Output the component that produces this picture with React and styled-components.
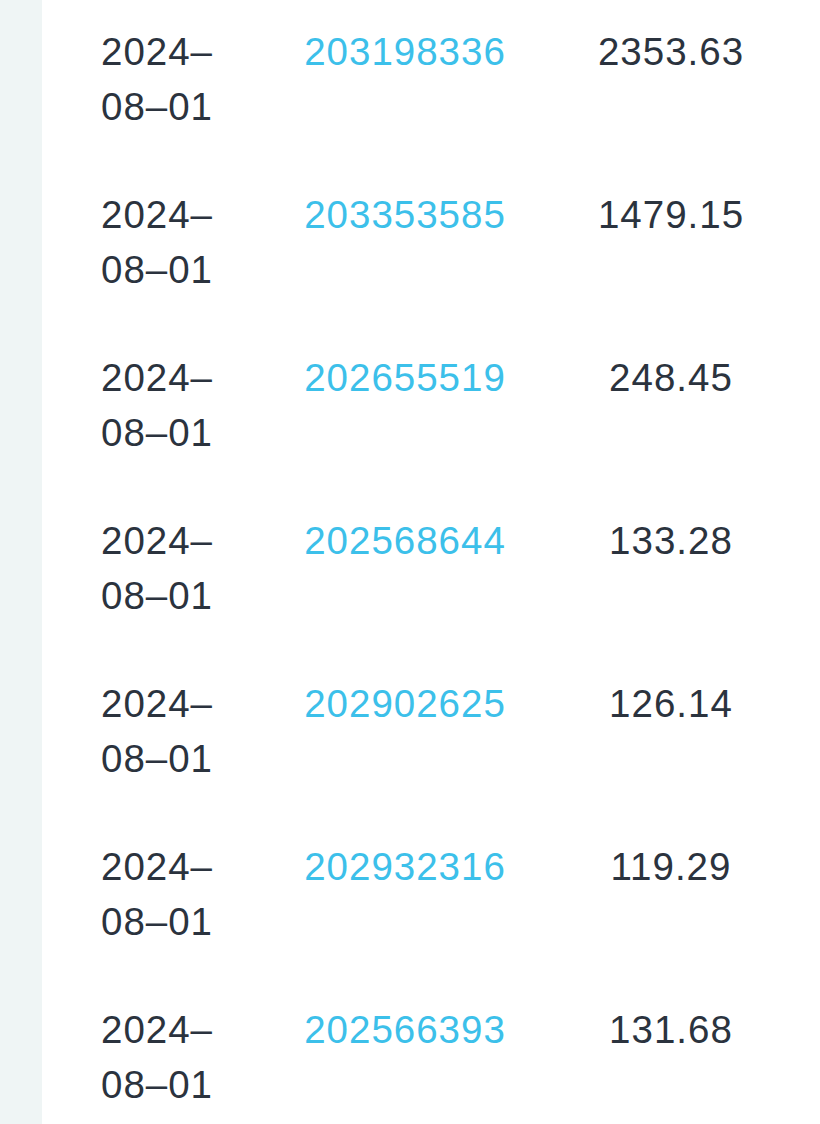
import React from "react";
import styled, { createGlobalStyle } from "styled-components";

const Global = createGlobalStyle`
  html, body { margin: 0; padding: 0; background: #ffffff; }
  body { font-family: "Liberation Sans", Arial, sans-serif; }
`;

const Page = styled.div`
  display: flex;
  min-height: 1124px;
  background: #ffffff;
`;

const SideStrip = styled.div`
  flex: 0 0 42px;
  background: #eff5f5;
`;

const Table = styled.div`
  flex: 1;
  display: flex;
  flex-direction: column;
  padding-right: 16px;
`;

const Row = styled.div`
  display: grid;
  grid-template-columns: 230px 266px 266px;
  align-items: start;
  padding: 24px 0 29px;
`;

const Cell = styled.div`
  font-size: 38.5px;
  line-height: 55px;
  letter-spacing: 1px;
  text-align: center;
  color: ${(p) => (p.$link ? "#3cc0ea" : "#2b333e")};
  padding: ${(p) => (p.$narrow ? "0 40px" : "0")};
`;

const rows = [
  ["203198336", "2353.63"],
  ["203353585", "1479.15"],
  ["202655519", "248.45"],
  ["202568644", "133.28"],
  ["202902625", "126.14"],
  ["202932316", "119.29"],
  ["202566393", "131.68"],
];

export default function App() {
  return (
    <>
      <Global />
      <Page>
        <SideStrip />
        <Table>
          {rows.map(([id, amount]) => (
            <Row key={id}>
              <Cell $narrow>2024–08–01</Cell>
              <Cell $link>{id}</Cell>
              <Cell>{amount}</Cell>
            </Row>
          ))}
        </Table>
      </Page>
    </>
  );
}
